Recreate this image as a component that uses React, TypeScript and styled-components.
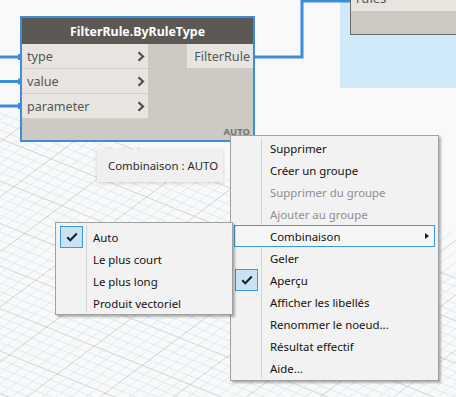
import React from "react";
import styled, { createGlobalStyle, css } from "styled-components";

const GlobalStyle = createGlobalStyle`
  html, body { margin: 0; padding: 0; background: #f9f9f9; overflow: hidden; }
  * { box-sizing: border-box; }
`;

const UI_FONT = `"Noto Sans", "Open Sans", "DejaVu Sans", sans-serif`;

const Canvas = styled.div`
  position: relative;
  width: 456px;
  height: 397px;
  overflow: hidden;
  background: #f9f9f9;
  font-family: ${UI_FONT};
`;

const Layer = styled.svg`
  position: absolute;
  left: 0;
  top: 0;
  width: 456px;
  height: 397px;
`;

const GroupArea = styled.div`
  position: absolute;
  left: 340px;
  top: 0;
  width: 116px;
  height: 88px;
  background: #d0eafa;
`;

const RulesNode = styled.div`
  position: absolute;
  left: 350px;
  top: -14px;
  width: 120px;
  height: 49px;
  display: flex;
  flex-direction: column;
  background: #cdc9c3;
  border-left: 1px solid #6d6a66;
  border-bottom: 1px solid #6d6a66;
`;

const RulesPort = styled.div`
  height: 25px;
  background: #e8e5e0;
  color: #555;
  font-size: 13px;
  line-height: 14px;
  padding: 5px 0 0 5px;
`;

const Node = styled.div`
  position: absolute;
  left: 20px;
  top: 16px;
  width: 235px;
  height: 126px;
  border: 2px solid #3d8ddb;
  display: flex;
  flex-direction: column;
  background: #cdc9c3;
`;

const NodeHeader = styled.div`
  height: 26px;
  background: #5b5855;
  color: #fff;
  font-weight: 700;
  font-size: 12.4px;
  display: flex;
  align-items: center;
  justify-content: center;
`;

const NodeBody = styled.div`
  flex: 1;
  display: flex;
  justify-content: space-between;
  position: relative;
`;

const PortColumn = styled.div<{ $width: number }>`
  width: ${(p) => p.$width}px;
  display: flex;
  flex-direction: column;
`;

const InputPort = styled.div`
  height: 25px;
  background: #e8e5e0;
  border-bottom: 1px solid #d3cfc9;
  display: flex;
  align-items: center;
  justify-content: space-between;
  padding: 0 3px 0 5px;
  color: #555;
  font-size: 12.6px;
`;

const OutputPort = styled.div`
  height: 24px;
  background: #e8e5e0;
  display: flex;
  align-items: center;
  justify-content: flex-end;
  padding-right: 3px;
  color: #555;
  font-size: 12.6px;
`;

const Chevron = styled.svg`
  width: 8px;
  height: 11px;
`;

const AutoTag = styled.div`
  position: absolute;
  right: 3px;
  bottom: 2px;
  font-size: 9.5px;
  font-weight: 700;
  color: #787570;
`;

const Tooltip = styled.div`
  position: absolute;
  left: 97px;
  top: 149px;
  width: 126px;
  height: 33px;
  background: #f0f0f0;
  box-shadow: 0 1px 4px rgba(0, 0, 0, 0.16);
  color: #2b2b2b;
  font-size: 11.4px;
  white-space: nowrap;
  display: flex;
  align-items: center;
  padding-left: 11px;
`;

const Menu = styled.div<{ $left: number; $top: number; $width: number; $pt: number; $pb: number }>`
  position: absolute;
  left: ${(p) => p.$left}px;
  top: ${(p) => p.$top}px;
  width: ${(p) => p.$width}px;
  padding: ${(p) => p.$pt}px 0 ${(p) => p.$pb}px;
  background: #f2f2f2;
  border: 1px solid #a0a0a0;
  box-shadow: 2px 2px 2px rgba(0, 0, 0, 0.28);
  display: flex;
  flex-direction: column;
  &::before {
    content: "";
    position: absolute;
    left: 30px;
    top: 2px;
    bottom: 2px;
    width: 1px;
    background: #d4d4d4;
  }
`;

const Item = styled.div<{ $disabled?: boolean; $active?: boolean; $indent: number }>`
  position: relative;
  height: 22px;
  display: flex;
  align-items: center;
  padding-left: ${(p) => p.$indent}px;
  font-size: 11.4px;
  white-space: nowrap;
  color: ${(p) => (p.$disabled ? "#8e8e8e" : "#111")};
  margin: 0 3px;
  border: 1px solid transparent;
  ${(p) =>
    p.$active &&
    css`
      border-color: #3a9be3;
      background: #f6f6f6;
    `}
`;

const CheckBox = styled.div`
  position: absolute;
  left: 0px;
  top: -1px;
  width: 23px;
  height: 22px;
  background: #c9e2f5;
  border: 1px solid #3a9be3;
  display: flex;
  align-items: center;
  justify-content: center;
`;

const SubArrow = styled.div`
  position: absolute;
  right: 5px;
  top: 7px;
  width: 0;
  height: 0;
  border-top: 3.5px solid transparent;
  border-bottom: 3.5px solid transparent;
  border-left: 4px solid #1a1a1a;
`;

const Check = () => (
  <svg width="12" height="10" viewBox="0 0 12 10">
    <path d="M1.2 5.2 L4.3 8.3 L10.8 1.5" fill="none" stroke="#222" strokeWidth="2.1" />
  </svg>
);

function GridBackground() {
  const lines: React.ReactNode[] = [];
  // family A: gently descending to the right
  for (let i = 0; i < 60; i++) {
    const c = 96 + i * 8.5;
    const major = i % 5 === 0;
    lines.push(
      <line
        key={"a" + i}
        x1={-10}
        y1={c - 0.4 * 10}
        x2={470}
        y2={c + 0.4 * 470}
        stroke={major ? "#bcc6cd" : "#d3e5ef"}
        strokeWidth={0.7}
      />
    );
  }
  // family B: descending to the left
  for (let i = 0; i < 80; i++) {
    const e = 120 + i * 11;
    const major = i % 5 === 2;
    lines.push(
      <line
        key={"b" + i}
        x1={-10}
        y1={e + 0.75 * 10}
        x2={470}
        y2={e - 0.75 * 470}
        stroke={major ? "#bcc6cd" : "#d3e5ef"}
        strokeWidth={0.7}
      />
    );
  }
  return (
    <Layer viewBox="0 0 456 397">
      <defs>
        <clipPath id="ground">
          <polygon points="0,110 456,232 456,397 0,397" />
        </clipPath>
      </defs>
      <g clipPath="url(#ground)">{lines}</g>
    </Layer>
  );
}

function Wires() {
  return (
    <Layer viewBox="0 0 456 397">
      <g stroke="#3d8ddb" strokeWidth="3" fill="none">
        <path d="M0 57 H21" />
        <path d="M0 81.5 H21" />
        <path d="M0 106 H21" />
        <path d="M254 57 H302 V1 H351" />
      </g>
      <g fill="#3d8ddb">
        <path d="M18 54 L22 54 L22 60 L18 60 Z" />
        <path d="M18 78.5 L22 78.5 L22 84.5 L18 84.5 Z" />
        <path d="M18 103 L22 103 L22 109 L18 109 Z" />
        <path d="M253 54 L257 57 L253 60 Z" />
      </g>
    </Layer>
  );
}

const inputs = ["type", "value", "parameter"];

const mainItems: { label: string; disabled?: boolean; active?: boolean; sub?: boolean; checked?: boolean }[] = [
  { label: "Supprimer" },
  { label: "Créer un groupe" },
  { label: "Supprimer du groupe", disabled: true },
  { label: "Ajouter au groupe", disabled: true },
  { label: "Combinaison", active: true, sub: true },
  { label: "Geler" },
  { label: "Aperçu", checked: true },
  { label: "Afficher les libellés" },
  { label: "Renommer le noeud..." },
  { label: "Résultat effectif" },
  { label: "Aide..." },
];

const subItems = [
  { label: "Auto", checked: true },
  { label: "Le plus court" },
  { label: "Le plus long" },
  { label: "Produit vectoriel" },
];

export default function App() {
  return (
    <>
      <GlobalStyle />
      <Canvas>
        <GridBackground />
        <GroupArea />
        <Wires />
        <RulesNode>
          <RulesPort>rules</RulesPort>
        </RulesNode>
        <Node>
          <NodeHeader>FilterRule.ByRuleType</NodeHeader>
          <NodeBody>
            <PortColumn $width={126}>
              {inputs.map((name) => (
                <InputPort key={name}>
                  <span>{name}</span>
                  <Chevron viewBox="0 0 8 11">
                    <path d="M1.5 1.2 L6 5.5 L1.5 9.8" fill="none" stroke="#4e4e4e" strokeWidth="2.2" />
                  </Chevron>
                </InputPort>
              ))}
            </PortColumn>
            <PortColumn $width={66}>
              <OutputPort>FilterRule</OutputPort>
            </PortColumn>
            <AutoTag>AUTO</AutoTag>
          </NodeBody>
        </Node>
        <Tooltip>Combinaison : AUTO</Tooltip>
        <Menu $left={230} $top={135} $width={209} $pt={1} $pb={1}>
          {mainItems.map((it) => (
            <Item key={it.label} $indent={35} $disabled={it.disabled} $active={it.active}>
              {it.checked && (
                <CheckBox>
                  <Check />
                </CheckBox>
              )}
              {it.label}
              {it.sub && <SubArrow />}
            </Item>
          ))}
        </Menu>
        <Menu $left={55} $top={222} $width={178} $pt={3} $pb={0}>
          {subItems.map((it) => (
            <Item key={it.label} $indent={33} $active={false}>
              {it.checked && (
                <CheckBox>
                  <Check />
                </CheckBox>
              )}
              {it.label}
            </Item>
          ))}
        </Menu>
      </Canvas>
    </>
  );
}
